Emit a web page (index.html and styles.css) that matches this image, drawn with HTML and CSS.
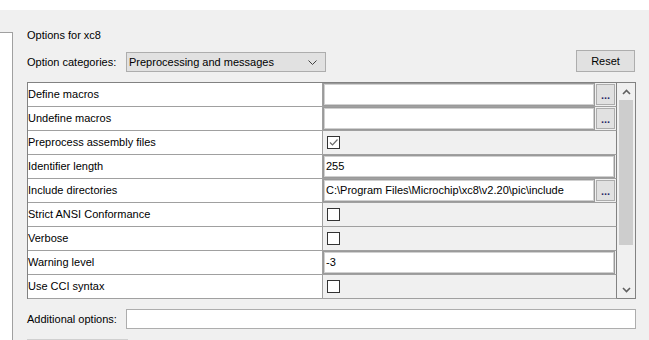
FILE: index.html
```html
<!DOCTYPE html>
<html lang="en">
<head>
    <meta charset="UTF-8">
    <meta name="viewport" content="width=device-width, initial-scale=1.0">
    <title>Options for xc8</title>
    <link rel="stylesheet" href="styles.css">
</head>
<body>
    <div class="topbar"></div>

    <div class="main">
        <div class="side-panel"></div>

        <div class="options">
            <div class="title">Options for xc8</div>

            <div class="category-row">
                <label class="label">Option categories:</label>
                <div class="dropdown">
                    <span>Preprocessing and messages</span>
                    <svg width="9" height="5" viewBox="0 0 9 5"><path d="M0.5 0.5 L4.5 4.5 L8.5 0.5" fill="none" stroke="#404040" stroke-width="1"/></svg>
                </div>
                <button class="reset-btn">Reset</button>
            </div>

            <div class="property-table">
                <div class="grid">
                    <div class="name">Define macros</div>
                    <div class="value"><div class="field"></div><button class="dots">...</button></div>

                    <div class="name">Undefine macros</div>
                    <div class="value"><div class="field"></div><button class="dots">...</button></div>

                    <div class="name">Preprocess assembly files</div>
                    <div class="value"><span class="checkbox checked"><svg width="11" height="11" viewBox="0 0 11 11"><path d="M2 5.5 L4.5 8 L9.5 2.5" fill="none" stroke="#6a6a6a" stroke-width="1.2"/></svg></span></div>

                    <div class="name">Identifier length</div>
                    <div class="value"><div class="field">255</div></div>

                    <div class="name">Include directories</div>
                    <div class="value"><div class="field">C:\Program Files\Microchip\xc8\v2.20\pic\include</div><button class="dots">...</button></div>

                    <div class="name">Strict ANSI Conformance</div>
                    <div class="value"><span class="checkbox"></span></div>

                    <div class="name">Verbose</div>
                    <div class="value"><span class="checkbox"></span></div>

                    <div class="name">Warning level</div>
                    <div class="value"><div class="field">-3</div></div>

                    <div class="name">Use CCI syntax</div>
                    <div class="value"><span class="checkbox"></span></div>
                </div>

                <div class="scrollbar">
                    <div class="arrow">
                        <svg width="9" height="6" viewBox="0 0 9 6"><path d="M1 5 L4.5 1.5 L8 5" fill="none" stroke="#606060" stroke-width="1.6"/></svg>
                    </div>
                    <div class="track"><div class="thumb"></div></div>
                    <div class="arrow">
                        <svg width="9" height="6" viewBox="0 0 9 6"><path d="M1 1 L4.5 4.5 L8 1" fill="none" stroke="#606060" stroke-width="1.6"/></svg>
                    </div>
                </div>
            </div>

            <div class="additional-row">
                <label class="label">Additional options:</label>
                <div class="text-input"></div>
            </div>

            <div class="bottom-btn"></div>
        </div>
    </div>
</body>
</html>
```

FILE: styles.css
```css
body {
    margin: 0;
    font-family: 'Liberation Sans', Arial, sans-serif;
    font-size: 11px;
    color: #000;
    background-color: #f0f0f0;
    height: 340px;
    overflow: hidden;
}

.topbar {
    height: 10px;
    background-color: #fff;
}

.main {
    display: flex;
    height: 330px;
    overflow: hidden;
}

.side-panel {
    width: 12px;
    height: 308px;
    margin-top: 22px;
    background-color: #fff;
    border-top: 1px solid #a0a0a0;
    border-right: 1px solid #a0a0a0;
}

.options {
    width: 609px;
    padding-left: 14px;
}

.title {
    margin-top: 17px;
    line-height: 16px;
}

.category-row {
    display: flex;
    align-items: flex-end;
    margin-top: 7px;
    height: 22px;
}

.label {
    width: 99px;
    line-height: 20px;
}

.dropdown {
    box-sizing: border-box;
    width: 200px;
    height: 20px;
    border: 1px solid #adadad;
    background-color: #e1e1e1;
    display: flex;
    align-items: center;
    justify-content: space-between;
    padding: 0 8px 0 2px;
}

.reset-btn {
    margin-left: auto;
    margin-right: 1px;
    box-sizing: border-box;
    width: 59px;
    height: 22px;
    border: 1px solid #adadad;
    background-color: #e1e1e1;
    font-family: inherit;
    font-size: 11px;
    color: #000;
    padding: 0;
}

.property-table {
    margin-top: 10px;
    display: flex;
    border: 1px solid #828282;
    border-bottom: none;
}

.grid {
    display: grid;
    grid-template-columns: 295px 294px;
    grid-auto-rows: 24px;
}

.name {
    box-sizing: border-box;
    background-color: #fff;
    border-bottom: 1px solid #a0a0a0;
    border-right: 1px solid #a0a0a0;
    line-height: 23px;
    white-space: nowrap;
}

.value {
    box-sizing: border-box;
    background-color: #f0f0f0;
    border-bottom: 1px solid #a0a0a0;
    border-right: 1px solid #828282;
    display: flex;
    align-items: center;
    padding: 0 1px 0 0;
}

.field {
    box-sizing: border-box;
    flex: 1;
    height: 23px;
    background-color: #fff;
    border: 1px solid #9a9a9a;
    box-shadow: inset 0 0 0 1px #d0d0d0;
    padding-left: 2px;
    line-height: 21px;
    white-space: nowrap;
    overflow: hidden;
}

.dots {
    box-sizing: border-box;
    width: 19px;
    height: 21px;
    margin-left: 1px;
    border: 1px solid #adadad;
    background-color: #e1e1e1;
    font-family: inherit;
    font-size: 11px;
    font-weight: bold;
    color: #2a2a6a;
    padding: 0 0 4px;
    line-height: 20px;
}

.checkbox {
    box-sizing: border-box;
    width: 13px;
    height: 13px;
    margin-left: 4px;
    border: 1px solid #333;
    background-color: #fff;
    display: flex;
    align-items: center;
    justify-content: center;
}

.scrollbar {
    width: 18px;
    display: flex;
    flex-direction: column;
    background-color: #f0f0f0;
    border-bottom: 1px solid #828282;
}

.arrow {
    height: 17px;
    display: flex;
    align-items: center;
    justify-content: center;
}

.track {
    flex: 1;
    padding: 0 2px;
}

.thumb {
    height: 145px;
    background-color: #cdcdcd;
}

.additional-row {
    display: flex;
    align-items: center;
    margin-top: 10px;
}

.text-input {
    box-sizing: border-box;
    flex: 1;
    height: 20px;
    background-color: #fff;
    border: 1px solid #adadad;
}

.bottom-btn {
    box-sizing: border-box;
    width: 101px;
    height: 22px;
    margin-top: 10px;
    border: 1px solid #d0d0d0;
    background-color: #e6e6e6;
}
```
